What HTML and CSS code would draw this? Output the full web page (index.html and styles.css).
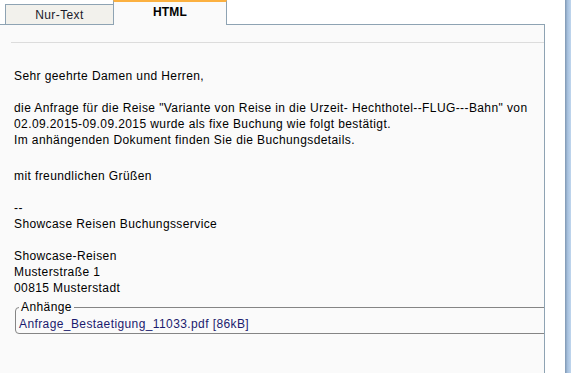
FILE: index.html
```html
<!DOCTYPE html>
<html lang="de">
<head>
    <meta charset="UTF-8">
    <meta name="viewport" content="width=device-width, initial-scale=1.0">
    <title>Buchungsbestätigung</title>
    <link rel="stylesheet" href="styles.css">
</head>
<body>
    <div class="page">
        <div class="viewer">
            <div class="tabs">
                <div class="tab">Nur-Text</div>
                <div class="tab active">HTML</div>
            </div>

            <div class="panel">
                <div class="toolbar"></div>

                <div class="mail">
                    <p class="gap">Sehr geehrte Damen und Herren,</p>
                    <p class="gap-wide">die Anfrage für die Reise "Variante von Reise in die Urzeit- Hechthotel--FLUG---Bahn" von<br>
                    02.09.2015-09.09.2015 wurde als fixe Buchung wie folgt bestätigt.<br>
                    Im anhängenden Dokument finden Sie die Buchungsdetails.</p>
                    <p class="gap">mit freundlichen Grüßen</p>
                    <p class="gap">--<br>
                    Showcase Reisen Buchungsservice</p>
                    <p>Showcase-Reisen<br>
                    Musterstraße 1<br>
                    00815 Musterstadt</p>
                </div>

                <fieldset class="attachments">
                    <legend>Anhänge</legend>
                    <a href="#">Anfrage_Bestaetigung_11033.pdf [86kB]</a>
                </fieldset>
            </div>
        </div>

        <div class="scroll-edge"></div>
    </div>
</body>
</html>
```

FILE: styles.css
```css
/* Allgemein */
body {
    margin: 0;
    padding: 0;
    font-family: "Liberation Sans", Arial, sans-serif;
    font-size: 12px;
    letter-spacing: 0.4px;
    color: #000;
    background-color: #fff;
}

.page {
    display: flex;
    justify-content: space-between;
    height: 373px;
    overflow: hidden;
}

.viewer {
    width: 545px;
    display: flex;
    flex-direction: column;
}

/* Reiter */
.tabs {
    display: flex;
    align-items: flex-end;
    height: 24px;
    padding-left: 5px;
    border-bottom: 1px solid #8ea3b3;
}

.tab {
    width: 107px;
    height: 19px;
    line-height: 20px;
    text-align: center;
    background-color: #f2f1ec;
    border: 1px solid #8ea3b3;
    border-bottom: none;
    border-right: none;
    color: #1a1a2a;
}

.tab.active {
    width: 112px;
    height: 23px;
    line-height: 20px;
    margin-bottom: -1px;
    background-color: #fafafa;
    border-right: 1px solid #8ea3b3;
    border-top: 2px solid #fbb040;
    font-weight: bold;
    letter-spacing: 0.2px;
    color: #000;
}

/* Inhalt */
.panel {
    flex: 1;
    background-color: #fafafa;
    border-right: 1px solid #8ea3b3;
    overflow: hidden;
}

.toolbar {
    height: 17px;
    margin-left: 11px;
    border-bottom: 1px solid #dcdcdc;
}

.mail {
    padding: 25px 0 0 14px;
    line-height: 16px;
}

.mail p {
    margin: 0;
    white-space: nowrap;
}

.mail .gap {
    margin-bottom: 16px;
}

.mail .gap-wide {
    margin-bottom: 20px;
}

/* Anhänge */
.attachments {
    width: 600px;
    margin: 4px 0 0 15px;
    padding: 2px 3px 1px;
    border: 1px solid #858585;
    border-radius: 4px;
    line-height: 16px;
}

.attachments legend {
    padding: 0 2px;
    line-height: 14px;
}

.attachments a {
    color: #1a1a6e;
    text-decoration: none;
}

/* Rand rechts */
.scroll-edge {
    width: 6px;
    background: linear-gradient(to right, #7f97b2, #a8c2df 45%, #c0d6ee);
}
```
